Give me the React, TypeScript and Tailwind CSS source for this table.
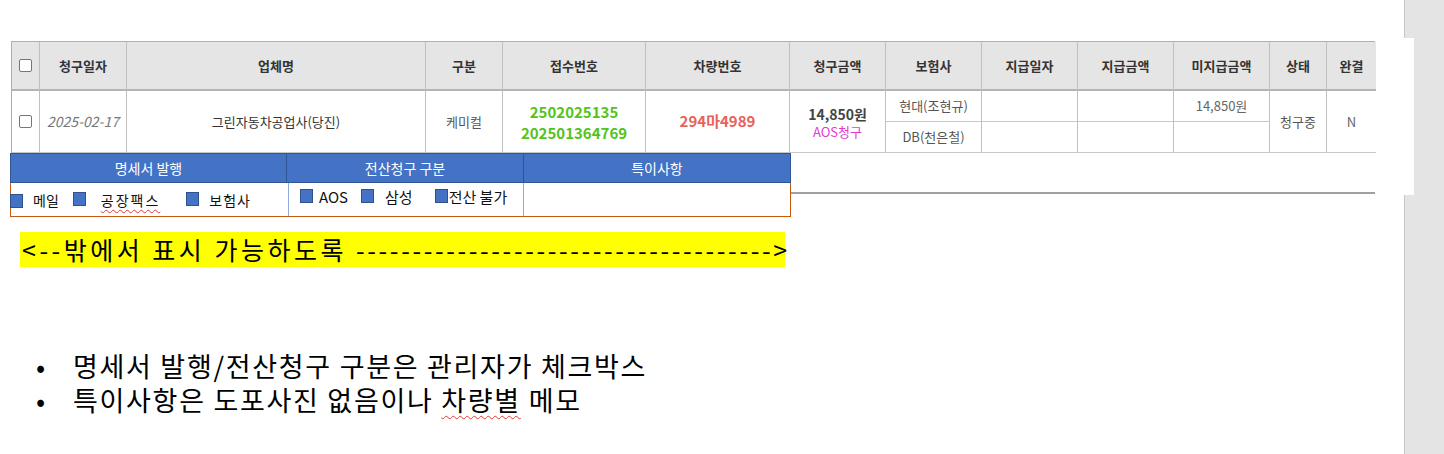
import React from "react";

const F = { fontFamily: '"Noto Sans CJK KR", "Noto Sans", sans-serif' };

function Chk() {
  return <span className="inline-block w-[13px] h-[13px] rounded-[2px] border border-[#767676] bg-white" />;
}

function BlueChk() {
  return <span className="inline-block shrink-0 w-[13px] h-[14px] bg-[#4472c4] border border-[#2f528f]" />;
}

const headers = ["청구일자", "업체명", "구분", "접수번호", "차량번호", "청구금액", "보험사", "지급일자", "지급금액", "미지급금액", "상태", "완결"];

export default function App() {
  const hc = "flex items-center justify-center bg-[#e5e5e5] border-b-2 border-b-[#b4b4b4] text-[13px] font-bold text-[#333]";
  const dc = "flex items-center justify-center border-b border-b-[#c8c8c8]";
  const br = " border-r border-r-[#c0c0c0]";
  return (
    <div className="w-[1444px] h-[454px] flex bg-white overflow-hidden" style={F}>
      <div className="w-[1404px] h-full">
        <div className="pt-[41px] pl-[11px]">
          <div className="w-[1364px] grid grid-cols-[28px_87px_299px_77px_143px_144px_96px_96px_96px_96px_96px_57px_49px] grid-rows-[49px_31px_31px] border-t border-l border-[#b0b0b0]">
            <div className={hc + br}><Chk /></div>
            {headers.map((h, i) => (
              <div key={h} className={hc + (i < headers.length - 1 ? br : "")}>{h}</div>
            ))}
            <div className={dc + br + " row-span-2"}><Chk /></div>
            <div className={dc + br + " row-span-2 italic text-[14px] text-[#777]"}>2025-02-17</div>
            <div className={dc + br + " row-span-2 text-[13px] text-[#333]"}>그린자동차공업사(당진)</div>
            <div className={dc + br + " row-span-2 text-[13px] text-[#555]"}>케미컬</div>
            <div className={dc + br + " row-span-2 flex-col text-[15px] font-semibold text-[#52c41a] leading-[21px]"}>
              <span>2502025135</span>
              <span>202501364769</span>
            </div>
            <div className={dc + br + " row-span-2 text-[15px] font-semibold text-[#e8625c]"}>294마4989</div>
            <div className={dc + br + " row-span-2 flex-col leading-[18px] pt-[2px]"}>
              <span className="text-[14px] font-bold text-[#444]">14,850원</span>
              <span className="text-[13px] text-[#e23bd0]">AOS청구</span>
            </div>
            <div className={dc + br + " col-start-8 row-start-2 text-[13px] text-[#555]"}>현대(조현규)</div>
            <div className={dc + br + " col-start-9 row-start-2"}></div>
            <div className={dc + br + " col-start-10 row-start-2"}></div>
            <div className={dc + br + " col-start-11 row-start-2 text-[13px] text-[#666]"}>14,850원</div>
            <div className={dc + br + " row-span-2 col-start-12 row-start-2 text-[13px] text-[#555]"}>청구중</div>
            <div className={dc + " row-span-2 col-start-13 row-start-2 text-[13px] text-[#666]"}>N</div>
            <div className={dc + br + " col-start-8 row-start-3 text-[13px] text-[#555]"}>DB(천은철)</div>
            <div className={dc + br + " col-start-9 row-start-3"}></div>
            <div className={dc + br + " col-start-10 row-start-3"}></div>
            <div className={dc + br + " col-start-11 row-start-3"}></div>
          </div>
        </div>

        <div className="ml-[10px] w-[1365px] flex">
          <div className="w-[781px] text-[14px]">
            <div className="h-[30px] flex bg-[#4472c4] border border-[#2f5597] text-white">
              <div className="w-[276px] flex items-center justify-center border-r border-[#2f5597]">명세서 발행</div>
              <div className="w-[237px] flex items-center justify-center border-r border-[#2f5597]">전산청구 구분</div>
              <div className="flex-1 flex items-center justify-center">특이사항</div>
            </div>
            <div className="h-[34px] flex border-l border-r border-b border-[#c55a11] text-[#111]">
              <div className="w-[278px] -ml-px flex items-center pt-[2px]">
                <BlueChk />
                <span className="ml-[10px]">메일</span>
                <span className="ml-[14px]"><BlueChk /></span>
                <span className="ml-[15px] tracking-[2px] underline decoration-wavy decoration-[#e53935] decoration-1 underline-offset-[3px]">공장팩스</span>
                <span className="ml-[26px]"><BlueChk /></span>
                <span className="ml-[10px] tracking-[1px]">보험사</span>
              </div>
              <div className="w-[235px] flex items-center border-l border-[#8faadc] pb-[4px] text-[15px]">
                <span className="ml-[11px]"><BlueChk /></span>
                <span className="ml-[6px]">AOS</span>
                <span className="ml-[13px]"><BlueChk /></span>
                <span className="ml-[11px]">삼성</span>
                <span className="ml-[22px]"><BlueChk /></span>
                <span className="ml-[1px]">전산 불가</span>
              </div>
              <div className="flex-1 border-l border-[#8faadc]" />
            </div>
          </div>
          <div className="flex-1 h-[41px] border-b-2 border-[#a0a0a0]" />
        </div>

        <div className="ml-[20px] mt-[15px] w-[765px] h-[35px] bg-[#ffff00] flex items-center pl-[2px] text-[25px] text-black whitespace-nowrap leading-none">
          <span className="tracking-[3.5px] whitespace-pre">&lt;--밖에서 표시 가능하도록 </span>
          <span className="tracking-[2.6px]">-------------------------------------</span>
          <span>&gt;</span>
        </div>

        <div className="mt-[82px] text-[27px] leading-[34px] text-black tracking-[1.7px]">
          <div className="flex">
            <span className="w-[73px] pl-[36px]">•</span>
            <span>명세서 발행/전산청구 구분은 관리자가 체크박스</span>
          </div>
          <div className="flex">
            <span className="w-[73px] pl-[36px]">•</span>
            <span>
              특이사항은 도포사진 없음이나{" "}
              <span className="underline decoration-wavy decoration-[#e53935] decoration-1 underline-offset-[4px]">차량별</span> 메모
            </span>
          </div>
        </div>
      </div>
      <div className="w-[40px] h-full bg-[#e4e4e4] border-l border-[#c6c6c6]">
        <div className="-ml-px mt-[38px] w-[10px] h-[157px] bg-white" />
      </div>
    </div>
  );
}
